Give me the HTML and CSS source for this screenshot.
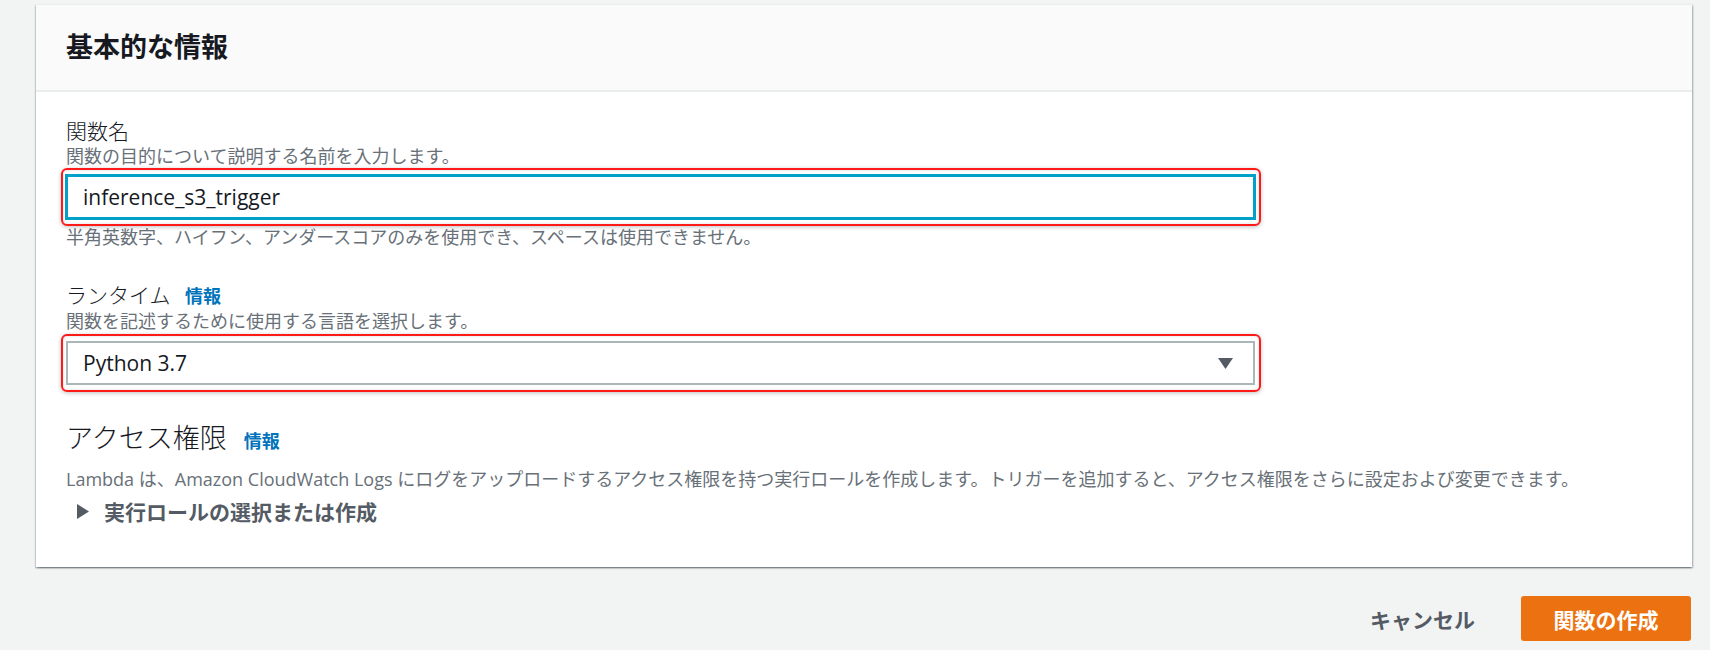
FILE: index.html
```html
<!DOCTYPE html>
<html lang="ja">
<head>
<meta charset="utf-8">
<title>基本的な情報</title>
<link rel="stylesheet" href="styles.css">
</head>
<body>
<div class="page">
  <section class="card">
    <div class="card-header">
      <h2>基本的な情報</h2>
    </div>
    <div class="card-body">
      <div class="label">関数名</div>
      <div class="desc">関数の目的について説明する名前を入力します。</div>
      <div class="field annotated">
        <div class="input focused">inference_s3_trigger</div>
      </div>
      <div class="hint">半角英数字、ハイフン、アンダースコアのみを使用でき、スペースは使用できません。</div>

      <div class="label label-gap">ランタイム <a class="info">情報</a></div>
      <div class="desc">関数を記述するために使用する言語を選択します。</div>
      <div class="field annotated field-select">
        <div class="select">
          <span>Python 3.7</span>
          <svg class="caret" width="15" height="11" viewBox="0 0 15 11"><polygon points="0,0 15,0 7.5,11" fill="#545b64"/></svg>
        </div>
      </div>

      <h3 class="section-title">アクセス権限 <a class="info">情報</a></h3>
      <div class="section-desc">Lambda は、Amazon CloudWatch Logs にログをアップロードするアクセス権限を持つ実行ロールを作成します。トリガーを追加すると、アクセス権限をさらに設定および変更できます。</div>
      <div class="expander">
        <svg width="12" height="15" viewBox="0 0 12 15"><polygon points="0,0 12,7.5 0,15" fill="#545b64"/></svg>
        <span>実行ロールの選択または作成</span>
      </div>
    </div>
  </section>
  <div class="actions">
    <button class="btn-cancel">キャンセル</button>
    <button class="btn-primary">関数の作成</button>
  </div>
</div>
</body>
</html>
```
FILE: styles.css
```css
html, body {
  margin: 0;
  padding: 0;
  background: #f2f3f3;
  font-family: "Open Sans", "Noto Sans CJK JP", sans-serif;
  color: #16191f;
}

.page {
  padding: 4px 18px 0 36px;
}

.card {
  background: #ffffff;
  border-top: 1px solid #eaeded;
  box-shadow: 0 1.5px 1.5px 0 rgba(0, 28, 36, 0.35),
              1.5px 1px 1.5px 0 rgba(0, 28, 36, 0.2),
              -1px 1px 1px 0 rgba(0, 28, 36, 0.12);
}

.card-header {
  background: #fafafa;
  padding: 24px 30px 25px;
  border-bottom: 2px solid #eaeded;
}

.card-header h2 {
  margin: 0;
  font-size: 27px;
  line-height: 36px;
  font-weight: 700;
  color: #16191f;
}

.card-body {
  padding: 26px 30px 41px;
}

.label {
  font-size: 21px;
  line-height: 26px;
  font-weight: 300;
  color: #16191f;
}

.label-gap {
  margin-top: 33px;
}

.info {
  font-size: 18px;
  font-weight: 700;
  color: #0073bb;
  margin-left: 9px;
  text-decoration: none;
}

.desc, .hint, .section-desc {
  font-size: 18px;
  line-height: 24px;
  color: #687078;
}

.hint {
  margin-top: 6px;
}

.field {
  position: relative;
  max-width: 1189px;
  margin-top: 7px;
}

.field-select {
  margin-top: 8px;
}

.annotated::after {
  content: "";
  position: absolute;
  top: -7px;
  bottom: -7px;
  left: -5px;
  right: -6px;
  border: 2px solid #ff1a1a;
  border-radius: 6px;
  box-shadow: 0 1px 4px rgba(0, 0, 0, 0.25), inset 0 0 3px rgba(0, 0, 0, 0.15);
  pointer-events: none;
}

.input, .select {
  box-sizing: border-box;
  height: 44px;
  padding: 0 15px;
  font-size: 21px;
  color: #16191f;
  background: #fff;
  display: flex;
  align-items: center;
}

.input.focused {
  border: 2px solid #00a1c9;
  box-shadow: 0 0 0 1px #00a1c9;
}

.select {
  border: 2px solid #aab7b8;
  justify-content: space-between;
  padding-right: 20px;
}

.section-title {
  margin: 35px 0 0;
  font-size: 27px;
  line-height: 36px;
  font-weight: 300;
  color: #16191f;
}

.section-title .info {
  margin-left: 10px;
}

.section-desc {
  margin-top: 8px;
}

.expander {
  margin-top: 5px;
  height: 30px;
  display: flex;
  align-items: center;
  gap: 15px;
  padding-left: 11px;
  font-size: 21px;
  font-weight: 700;
  color: #545b64;
}

.actions {
  display: flex;
  justify-content: flex-end;
  align-items: center;
  gap: 46px;
  margin-top: 29px;
  padding-right: 1px;
}

.btn-cancel {
  border: none;
  background: transparent;
  padding: 0;
  font-family: inherit;
  font-size: 21px;
  font-weight: 700;
  color: #545b64;
}

.btn-primary {
  width: 170px;
  height: 45px;
  border: none;
  border-radius: 3px;
  background: #ec7211;
  color: #ffffff;
  font-family: inherit;
  font-size: 21px;
  font-weight: 700;
}
```
